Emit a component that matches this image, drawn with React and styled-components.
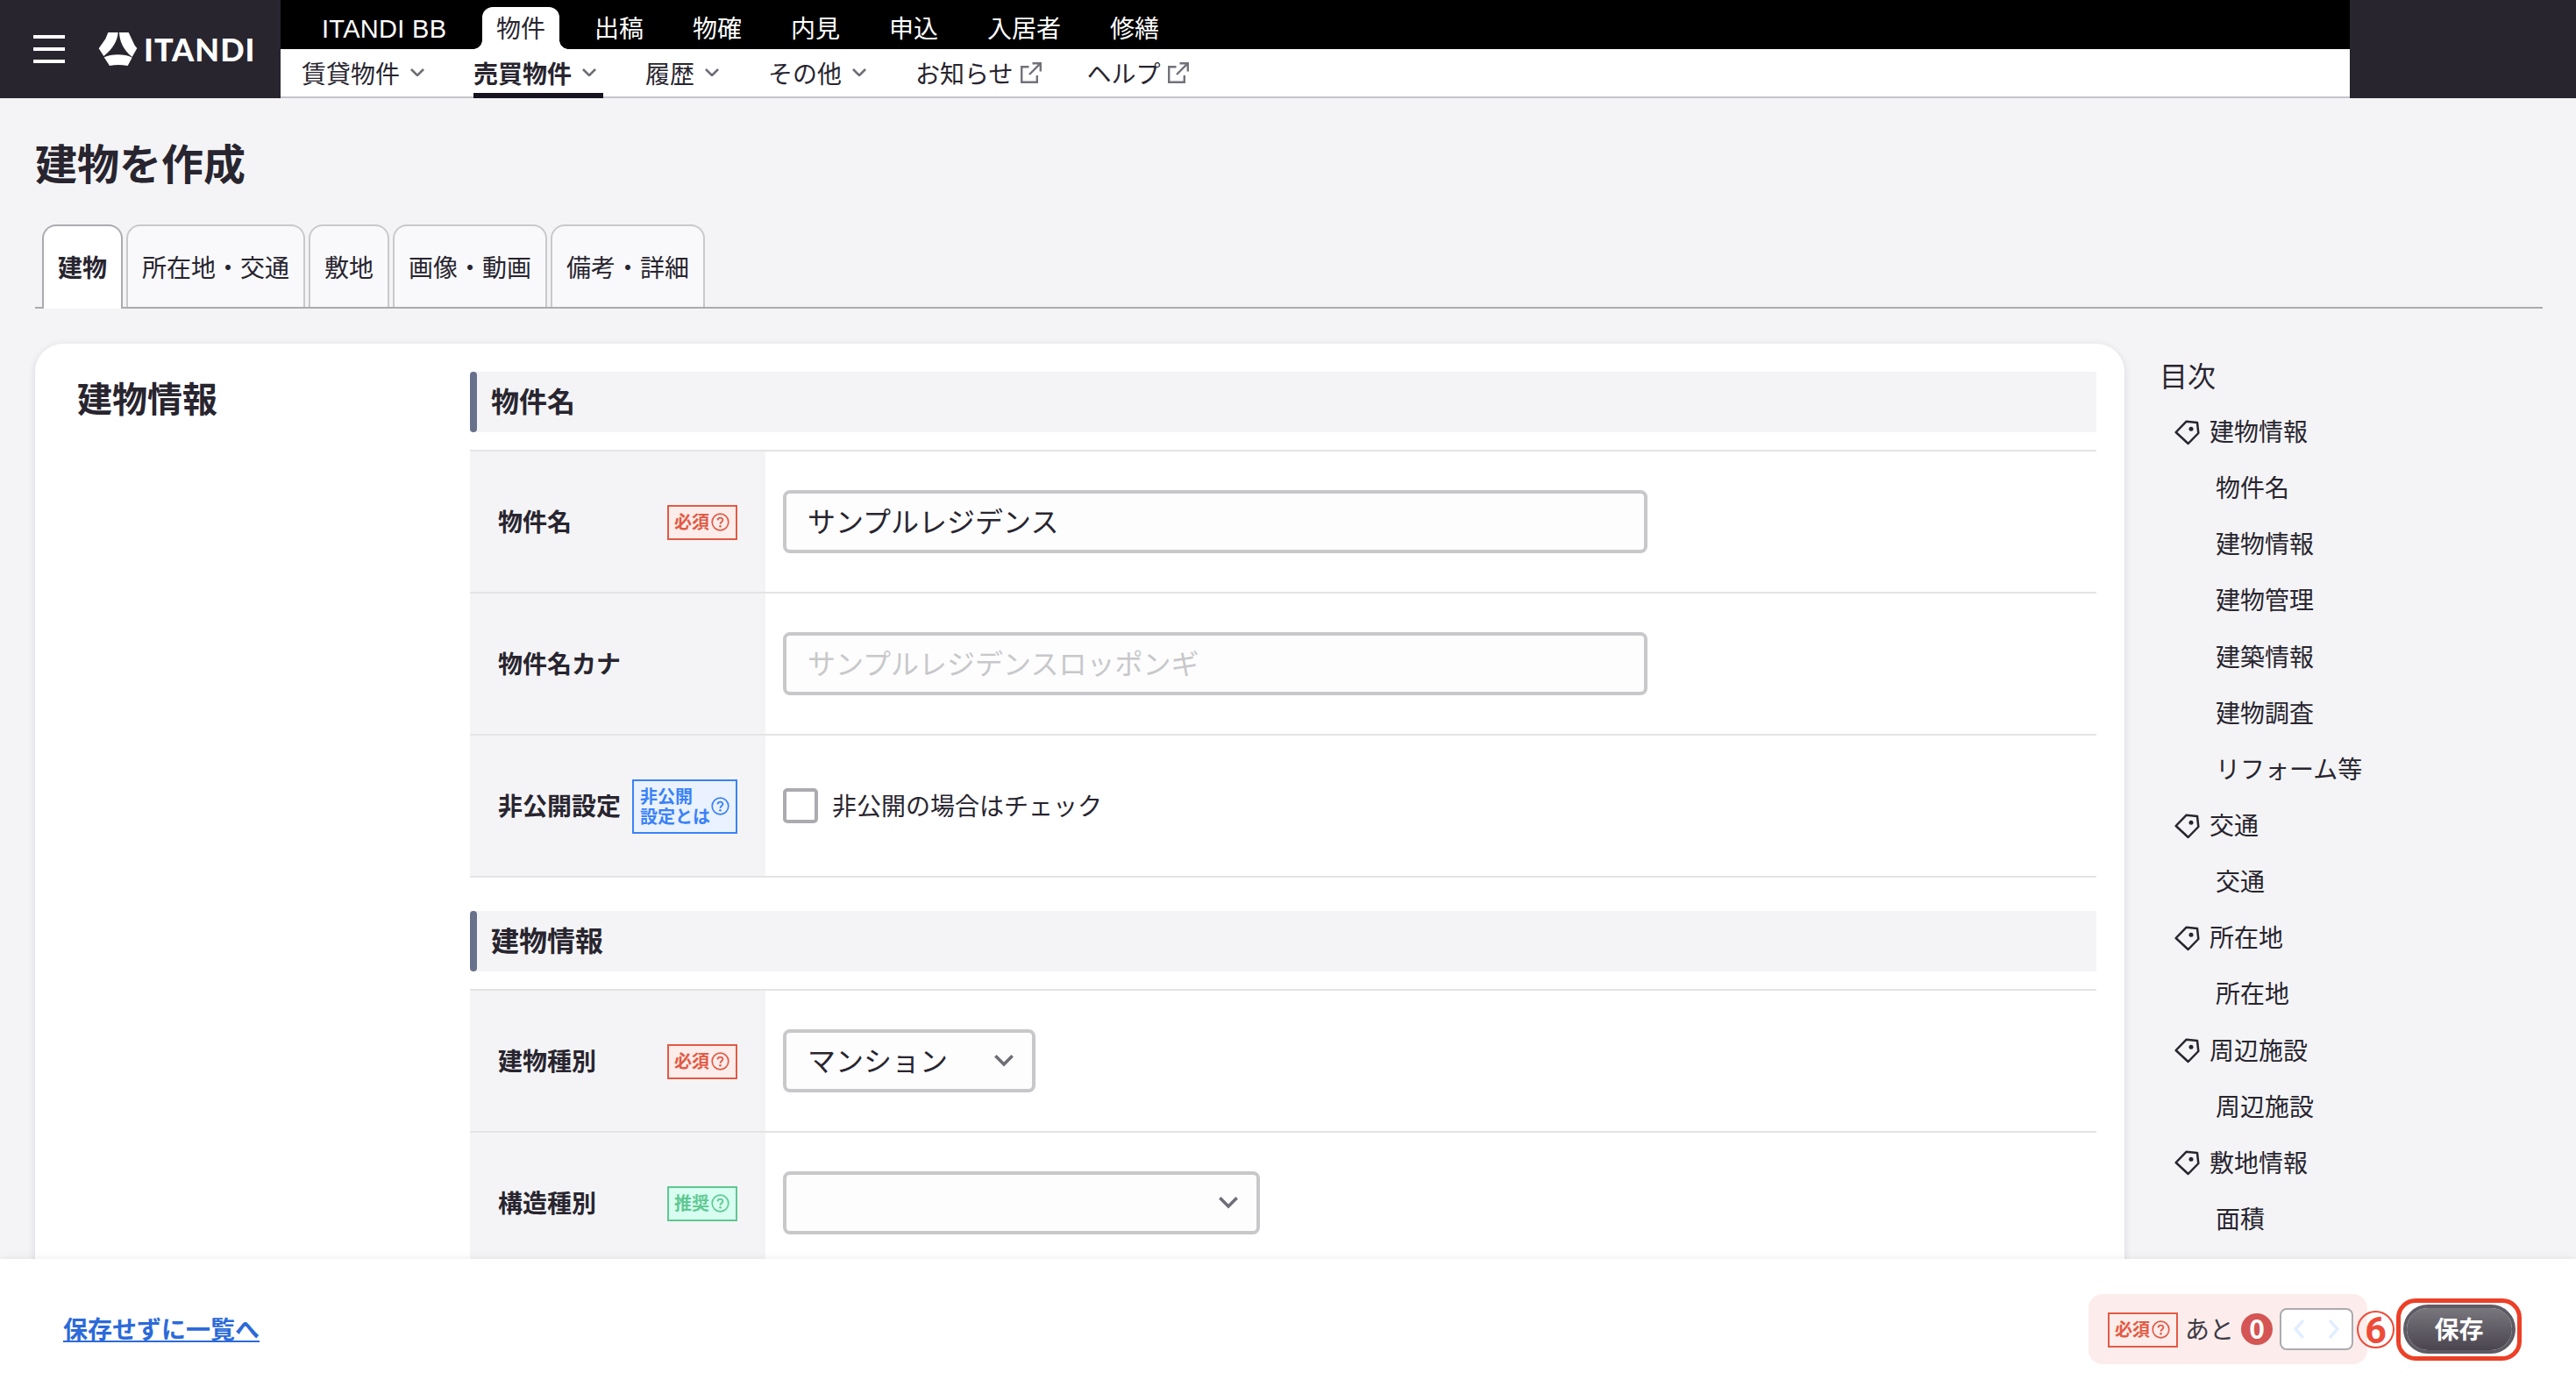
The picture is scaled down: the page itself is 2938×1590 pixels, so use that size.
import React from "react";
import styled, { createGlobalStyle, css } from "styled-components";

const ink = "#28252f";
const surface = "#f4f4f6";
const rule = "#e4e4e5";

const GlobalStyle = createGlobalStyle`
  *, *::before, *::after { box-sizing: border-box; }
  body {
    margin: 0;
    background: ${surface};
    color: ${ink};
    font-family: "Noto Sans CJK JP", sans-serif;
    font-size: 28px;
    line-height: 1.5;
  }
`;

const Page = styled.div`
  display: flex;
  flex-direction: column;
  width: 2938px;
  height: 1590px;
  overflow: hidden;
`;

/* ---------- header ---------- */

const Header = styled.header`
  display: flex;
  flex: none;
  height: 112px;
  background: ${ink};
`;

const Brand = styled.div`
  display: flex;
  align-items: center;
  width: 320px;
  padding-left: 38px;
`;

const MenuButton = styled.div`
  display: flex;
  flex-direction: column;
  gap: 10px;
  width: 36px;
  margin-right: 38px;
`;

const MenuLine = styled.span`
  height: 4px;
  background: #fff;
`;

const BrandName = styled.span`
  margin-left: 7px;
  color: #fff;
  font-family: Lato, sans-serif;
  font-size: 36px;
  font-weight: 900;
  line-height: 40px;
  letter-spacing: 1px;
`;

const NavArea = styled.div`
  width: 2360px;
`;

const ServiceNav = styled.nav`
  display: flex;
  align-items: flex-end;
  height: 56px;
  padding-left: 30px;
  background: #000;
`;

const ServiceTab = styled.a`
  position: relative;
  height: 48px;
  margin: 0 12px;
  padding: 0 16px;
  border-radius: 12px 12px 0 0;
  color: #fff;
  line-height: 46px;
  ${(p) =>
    p.$latin &&
    css`
      width: 160px;
      margin-left: 0;
      margin-right: 28px;
      padding: 0 0 0 17px;
      white-space: nowrap;
      font-family: "Liberation Sans", "Noto Sans CJK JP", sans-serif;
      font-size: 29px;
      letter-spacing: 0.3px;
      line-height: 50px;
    `}
  ${(p) =>
    p.$active &&
    css`
      background: #fff;
      color: ${ink};
      &::before,
      &::after {
        content: "";
        position: absolute;
        bottom: 0;
        width: 10px;
        height: 10px;
      }
      &::before {
        left: -10px;
        background: radial-gradient(circle at 0 0, transparent 9.5px, #fff 10px);
      }
      &::after {
        right: -10px;
        background: radial-gradient(circle at 100% 0, transparent 9.5px, #fff 10px);
      }
    `}
`;

const SubNav = styled.nav`
  display: flex;
  gap: 48px;
  height: 56px;
  padding-left: 24px;
  background: #fff;
  border-bottom: 2px solid #c5c4cb;
`;

const SubNavItem = styled.a`
  display: flex;
  align-items: center;
  height: 56px;
  padding-top: 3px;
  padding-right: ${(p) => (p.$external ? 4 : 8)}px;
  gap: ${(p) => (p.$external ? 8 : 12)}px;
  line-height: 46px;
  font-weight: ${(p) => (p.$active ? 700 : 400)};
  border-bottom: 6px solid ${(p) => (p.$active ? "#171320" : "transparent")};
`;

/* ---------- page body ---------- */

const Body = styled.main`
  flex: 1;
  min-height: 0;
  padding: 36px 38px 0 40px;
  overflow: hidden;
`;

const PageTitle = styled.h1`
  margin: 0;
  font-size: 48px;
  line-height: 72px;
  font-weight: 700;
`;

const TabBar = styled.div`
  display: flex;
  gap: 4px;
  height: 96px;
  margin-top: 36px;
  padding-left: 8px;
  border-bottom: 2px solid #ababb0;
`;

const Tab = styled.a`
  height: ${(p) => (p.$active ? 96 : 94)}px;
  padding: 0 16px;
  border: 2px solid ${(p) => (p.$active ? "#ababb0" : "#c9c9cb")};
  border-bottom: 0;
  border-radius: 16px 16px 0 0;
  background: ${(p) => (p.$active ? "#fff" : "#f9f9fb")};
  font-weight: ${(p) => (p.$active ? 700 : 400)};
  line-height: 92px;
`;

const Columns = styled.div`
  display: flex;
  align-items: flex-start;
  padding-top: 40px;
`;

const Card = styled.section`
  display: flex;
  width: 2383px;
  height: 1200px;
  padding: 32px 32px 0 48px;
  border-radius: 32px;
  background: #fff;
  box-shadow: 0 2px 8px rgba(40, 37, 80, 0.14);
`;

const CardTitle = styled.h2`
  width: 448px;
  margin: 0;
  font-size: 40px;
  line-height: 59px;
  font-weight: 700;
`;

const Sections = styled.div`
  display: flex;
  flex-direction: column;
  flex: 1;
  gap: 38px;
`;

const SectionTitle = styled.h3`
  display: flex;
  gap: 16px;
  height: 69px;
  margin: 0 0 20px;
  background: ${surface};
  font-size: 32px;
  line-height: 64px;
  font-weight: 700;
  &::before {
    content: "";
    width: 8px;
    border-radius: 4px;
    background: #67718b;
  }
`;

const FieldTable = styled.div`
  border-top: 2px solid ${rule};
`;

const FieldRow = styled.div`
  display: flex;
  height: 162px;
  border-bottom: 2px solid ${rule};
`;

const FieldLabel = styled.div`
  display: flex;
  align-items: center;
  justify-content: space-between;
  width: 337px;
  padding: 0 32px;
  background: ${surface};
  font-weight: 700;
  white-space: nowrap;
`;

const LabelText = styled.span`
  padding-bottom: 2px;
`;

const FieldValue = styled.div`
  display: flex;
  align-items: center;
  gap: 16px;
  padding-left: 20px;
`;

const tones = {
  required: ["#e25a45", "#fcedeb"],
  recommended: ["#5fc892", "#d7fef0"],
  info: ["#3a82f7", "#eaf2ff"],
};

const Badge = styled.span`
  display: flex;
  align-items: center;
  justify-content: space-between;
  flex: none;
  width: ${(p) => (p.$wide ? 120 : 80)}px;
  height: ${(p) => (p.$wide ? 62 : 40)}px;
  margin-top: 1px;
  padding: 0 7px 0 ${(p) => (p.$wide ? 7 : 6)}px;
  border: 2px solid ${(p) => tones[p.$tone][0]};
  background: ${(p) => tones[p.$tone][1]};
  color: ${(p) => tones[p.$tone][0]};
  font-size: 20px;
  font-weight: 700;
  line-height: 23px;
  white-space: pre;
`;

const BadgeText = styled.span`
  padding-bottom: 2px;
`;

const TextInput = styled.input`
  width: 986px;
  height: 72px;
  padding: 0 24px 4px;
  border: 4px solid #c8c8ca;
  border-radius: 8px;
  background: #fdfdfe;
  color: ${ink};
  font: inherit;
  font-size: 32px;
  &::placeholder {
    color: #c8c8ca;
    opacity: 1;
  }
`;

const SelectBox = styled.div`
  display: flex;
  align-items: center;
  justify-content: space-between;
  width: ${(p) => p.$width}px;
  height: 72px;
  padding: 0 21px 0 24px;
  border: 4px solid #c8c8ca;
  border-radius: 8px;
  background: #fdfdfe;
  font-size: 32px;
`;

const SelectValue = styled.span`
  padding-bottom: 5px;
`;

const CheckBox = styled.span`
  width: 40px;
  height: 40px;
  border: 4px solid #ababb0;
  border-radius: 5px;
  background: #fff;
`;

/* ---------- table of contents ---------- */

const Toc = styled.aside`
  padding: 11px 0 0 40px;
`;

const TocTitle = styled.div`
  font-size: 32px;
  line-height: 48px;
  margin-bottom: 10px;
`;

const TocItem = styled.div`
  display: flex;
  align-items: center;
  gap: 11px;
  height: 64.15px;
  padding-left: ${(p) => (p.$child ? 64 : 17)}px;
`;

const TocText = styled.span`
  padding-bottom: 4px;
`;

/* ---------- footer ---------- */

const Footer = styled.footer`
  position: relative;
  display: flex;
  align-items: center;
  flex: none;
  height: 154px;
  padding: 6px 62px 0 72px;
  background: #fff;
  box-shadow: 0 0 10px rgba(0, 0, 0, 0.08);
`;

const BackLink = styled.a`
  margin-right: auto;
  color: #2c6ad9;
  font-weight: 700;
  line-height: 28px;
  height: 30px;
  border-bottom: 2px solid #2c6ad9;
`;

const Remaining = styled.div`
  display: flex;
  align-items: center;
  width: 318px;
  height: 80px;
  padding-left: 22px;
  border-radius: 16px;
  background: #fcedec;
`;

const RemainingText = styled.span`
  margin: 0 8px;
  padding-bottom: 2px;
  color: #3c3a44;
`;

const Count = styled.span`
  width: 36px;
  height: 36px;
  margin-right: 8px;
  border-radius: 50%;
  background: #d55454;
  color: #fff;
  font-family: "Noto Sans CJK JP", sans-serif;
  font-size: 30px;
  font-weight: 700;
  line-height: 32px;
  text-align: center;
`;

const Stepper = styled.span`
  display: flex;
  align-items: center;
  justify-content: space-between;
  width: 84px;
  height: 48px;
  padding: 0 14px;
  border: 2px solid #ababb0;
  border-radius: 8px;
  background: #fff;
`;

const StepMark = styled.span`
  z-index: 1;
  width: 43px;
  height: 43px;
  margin: 0 2px 0 -12px;
  border: 2px solid #ed4b38;
  border-radius: 50%;
  color: #ed4b38;
  font-size: 43px;
  font-weight: 700;
  font-family: Roboto, sans-serif;
  line-height: 41px;
  text-align: center;
`;

const Highlight = styled.div`
  display: flex;
  align-items: center;
  justify-content: center;
  width: 143px;
  height: 71px;
  border: 5px solid #ec4027;
  border-radius: 22px;
`;

const SaveButton = styled.button`
  width: 128px;
  height: 56px;
  padding: 0 0 3px;
  border: 4px solid #5f5b65;
  border-radius: 28px;
  background: linear-gradient(#79767d, #4a454f) padding-box;
  color: #fff;
  font: inherit;
  font-weight: 700;
  line-height: 42px;
`;

/* ---------- icons ---------- */

const Logo = () => (
  <svg width="45" height="38" viewBox="276 50 131 114" fill="#fff">
    <path d="M308 50 H342 C340 76 327 104 293 131 L276 105 L299 72 Z" />
    <path d="M346 50 H378 L399 94 L407 104 L390 134 C358 108 347 78 346 50 Z" />
    <path d="M294 135 C320 123 364 123 390 136 L375 164 C352 160 332 160 313 164 Z" />
  </svg>
);

const ChevronDown = ({ size = 16, stroke = 2.6 }) => (
  <svg width={size} height={size * 0.6} viewBox="0 0 20 12" fill="none" stroke="#6f6d76" strokeWidth={(stroke * 20) / size}>
    <path d="M1.2 1.2 L10 10 L18.8 1.2" />
  </svg>
);

const ExternalLink = () => (
  <svg width="24" height="24" viewBox="0 0 24 24" fill="none" stroke="#73717a" strokeWidth="2.4">
    <path d="M9.5 5.2 H1.2 V22.8 H18.8 V15" />
    <path d="M13.5 1.2 H22.8 V10.5 M22.8 1.2 L10 14" />
  </svg>
);

const Question = () => (
  <svg width="21" height="21" viewBox="0 0 21 21" fill="none" stroke="currentColor">
    <circle cx="10.5" cy="10.5" r="9.3" strokeWidth="1.7" />
    <path d="M7.5 8.4 C7.6 4.7 13.4 4.8 13.4 8.1 C13.4 10.3 10.5 10.2 10.5 12.8" strokeWidth="1.9" />
    <circle cx="10.5" cy="15.2" r="1.3" fill="currentColor" stroke="none" />
  </svg>
);

const Tag = () => (
  <svg width="29" height="29" viewBox="61 54 87 87" fill="none" stroke={ink} strokeWidth="7.5" strokeLinejoin="round">
    <path d="M66 96 L102 59 L139 63 L143 99 L108 135 Z" />
    <circle cx="118" cy="85" r="7.5" fill={ink} stroke="none" />
  </svg>
);

const Arrow = ({ flip }) => (
  <svg width="12" height="24" viewBox="0 0 12 24" fill="none" stroke="#e1eeff" strokeWidth="3.4">
    <path d={flip ? "M1 2 L10 12 L1 22" : "M11 2 L2 12 L11 22"} />
  </svg>
);

/* ---------- data ---------- */

const services = ["ITANDI BB", "物件", "出稿", "物確", "内見", "申込", "入居者", "修繕"];

const subNav = [
  { text: "賃貸物件" },
  { text: "売買物件", active: true },
  { text: "履歴" },
  { text: "その他" },
  { text: "お知らせ", external: true },
  { text: "ヘルプ", external: true },
];

const tabs = ["建物", "所在地・交通", "敷地", "画像・動画", "備考・詳細"];

const toc = [
  ["建物情報", "物件名", "建物情報", "建物管理", "建築情報", "建物調査", "リフォーム等"],
  ["交通", "交通"],
  ["所在地", "所在地"],
  ["周辺施設", "周辺施設"],
  ["敷地情報", "面積"],
];

function HelpBadge({ tone, text, wide }) {
  return (
    <Badge $tone={tone} $wide={wide}>
      <BadgeText>{text}</BadgeText>
      <Question />
    </Badge>
  );
}

function Field({ label, badge, children }) {
  return (
    <FieldRow>
      <FieldLabel>
        <LabelText>{label}</LabelText>
        {badge}
      </FieldLabel>
      <FieldValue>{children}</FieldValue>
    </FieldRow>
  );
}

function Select({ width, value }) {
  return (
    <SelectBox $width={width}>
      <SelectValue>{value}</SelectValue>
      <ChevronDown size={22} stroke={3.6} />
    </SelectBox>
  );
}

export default function App() {
  return (
    <Page>
      <GlobalStyle />
      <Header>
        <Brand>
          <MenuButton>
            <MenuLine />
            <MenuLine />
            <MenuLine />
          </MenuButton>
          <Logo />
          <BrandName>ITANDI</BrandName>
        </Brand>
        <NavArea>
          <ServiceNav>
            {services.map((s, i) => (
              <ServiceTab key={s} $latin={i === 0} $active={i === 1}>
                {s}
              </ServiceTab>
            ))}
          </ServiceNav>
          <SubNav>
            {subNav.map((n) => (
              <SubNavItem key={n.text} $active={n.active} $external={n.external}>
                {n.text}
                {n.external ? <ExternalLink /> : <ChevronDown />}
              </SubNavItem>
            ))}
          </SubNav>
        </NavArea>
      </Header>

      <Body>
        <PageTitle>建物を作成</PageTitle>
        <TabBar>
          {tabs.map((t, i) => (
            <Tab key={t} $active={i === 0}>
              {t}
            </Tab>
          ))}
        </TabBar>
        <Columns>
          <Card>
            <CardTitle>建物情報</CardTitle>
            <Sections>
              <div>
                <SectionTitle>物件名</SectionTitle>
                <FieldTable>
                  <Field label="物件名" badge={<HelpBadge tone="required" text="必須" />}>
                    <TextInput defaultValue="サンプルレジデンス" />
                  </Field>
                  <Field label="物件名カナ">
                    <TextInput placeholder="サンプルレジデンスロッポンギ" />
                  </Field>
                  <Field label="非公開設定" badge={<HelpBadge tone="info" text={"非公開\n設定とは"} wide />}>
                    <CheckBox />
                    <LabelText>非公開の場合はチェック</LabelText>
                  </Field>
                </FieldTable>
              </div>
              <div>
                <SectionTitle>建物情報</SectionTitle>
                <FieldTable>
                  <Field label="建物種別" badge={<HelpBadge tone="required" text="必須" />}>
                    <Select width={288} value="マンション" />
                  </Field>
                  <Field label="構造種別" badge={<HelpBadge tone="recommended" text="推奨" />}>
                    <Select width={544} value="" />
                  </Field>
                </FieldTable>
              </div>
            </Sections>
          </Card>
          <Toc>
            <TocTitle>目次</TocTitle>
            {toc.map(([group, ...items]) => (
              <div key={group}>
                <TocItem>
                  <Tag />
                  <TocText>{group}</TocText>
                </TocItem>
                {items.map((item) => (
                  <TocItem key={item} $child>
                    <TocText>{item}</TocText>
                  </TocItem>
                ))}
              </div>
            ))}
          </Toc>
        </Columns>
      </Body>

      <Footer>
        <BackLink>保存せずに一覧へ</BackLink>
        <Remaining>
          <HelpBadge tone="required" text="必須" />
          <RemainingText>あと</RemainingText>
          <Count>0</Count>
          <Stepper>
            <Arrow />
            <Arrow flip />
          </Stepper>
        </Remaining>
        <StepMark>6</StepMark>
        <Highlight>
          <SaveButton>保存</SaveButton>
        </Highlight>
      </Footer>
    </Page>
  );
}
